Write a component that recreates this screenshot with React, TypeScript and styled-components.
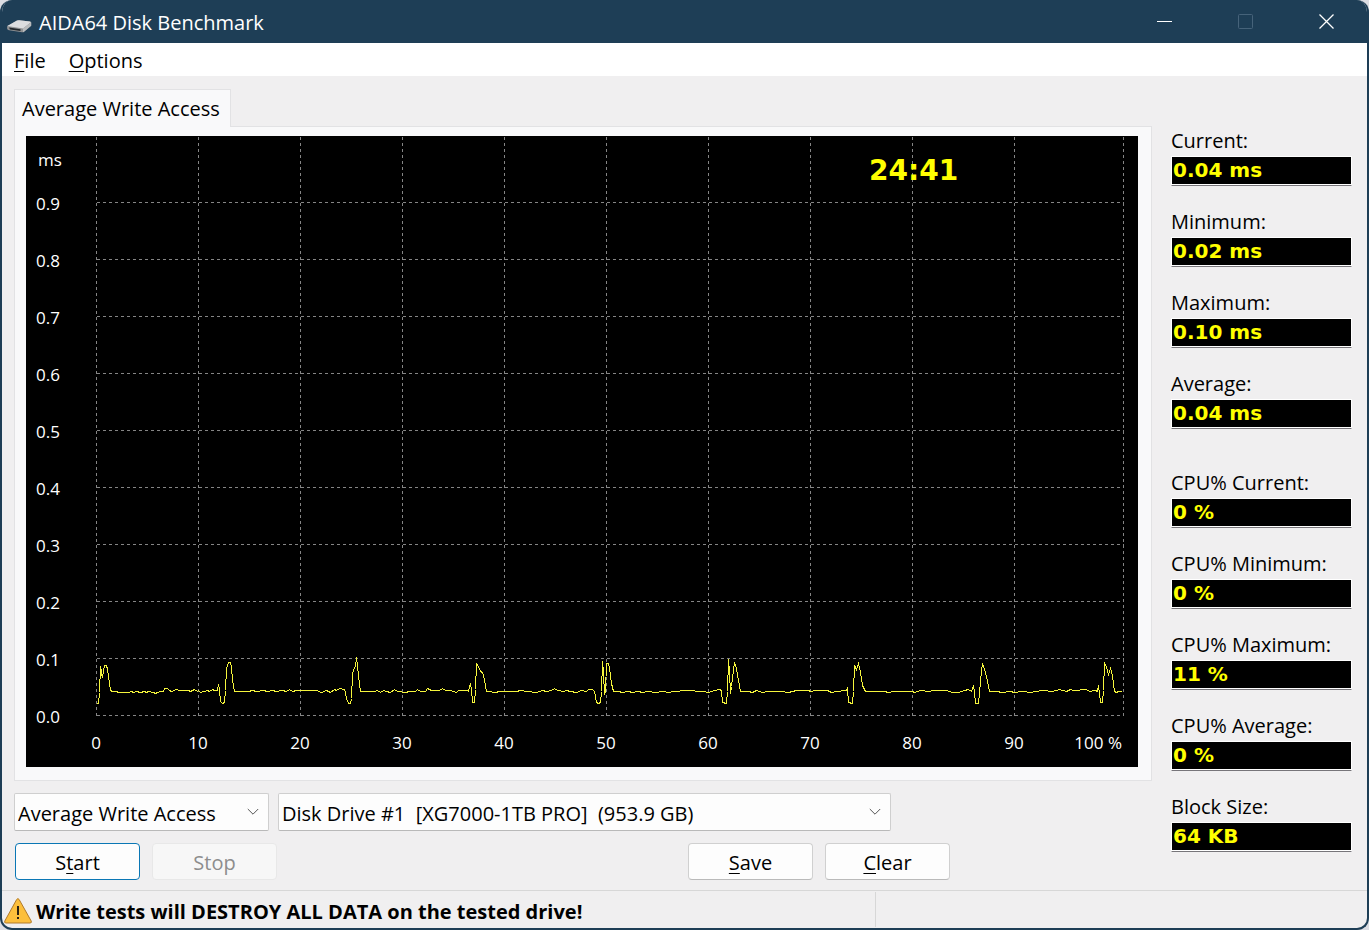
import React from "react";
import styled, { createGlobalStyle, css } from "styled-components";

const uiFont = '"Open Sans", "Noto Sans", sans-serif';
const readoutFont = '"DejaVu Sans", Verdana, sans-serif';

const GlobalStyle = createGlobalStyle`
  *, *::before, *::after { box-sizing: border-box; }
  body {
    margin: 0;
    background: #dcdde3;
    color: #000;
    font: 20px/27px ${uiFont};
  }
  button, select { font: inherit; color: inherit; }
`;

const Window = styled.div`
  display: flex;
  flex-direction: column;
  min-height: 100vh;
  overflow: hidden;
  border: 2px solid #1e3e56;
  border-top: 0;
  border-radius: 12px;
  background: #f0eff0;
`;

const TitleBar = styled.header`
  display: flex;
  align-items: center;
  height: 43px;
  padding-left: 3px;
  background: #1e3e56;
  color: #fff;
`;

const Title = styled.h1`
  flex: 1;
  margin: 0 0 0 6px;
  padding-top: 2px;
  font-size: 20px;
  font-weight: 400;
`;

const CaptionButton = styled.button`
  display: grid;
  place-items: center;
  width: 81px;
  height: 43px;
  padding: 0;
  border: 0;
  background: none;
  color: #fff;

  &:disabled { color: #46637a; }
`;

const MenuBar = styled.nav`
  display: flex;
  gap: 23px;
  height: 33px;
  padding: 0 12px;
  background: #fff;
`;

const MenuItem = styled.button`
  padding: 2px 0 0;
  border: 0;
  background: none;
`;

const Key = styled.span`
  text-decoration: underline;
  text-decoration-thickness: 1px;
  text-underline-offset: 3px;
`;

const Body = styled.main`
  display: grid;
  flex: 1;
  grid-template-columns: minmax(0, 1fr) 181px;
  gap: 19px;
  padding: 13px 15px 10px 12px;
`;

const Tab = styled.button`
  display: block;
  position: relative;
  height: 38px;
  margin-bottom: -1px;
  padding: 0 10px 0 7px;
  border: 1px solid #e2e2e4;
  border-bottom: 0;
  background: #f9f9fa;
`;

const TabPanel = styled.section`
  padding: 9px 13px 13px 11px;
  border: 1px solid #e2e2e4;
  background: #f9f9fa;
`;

const Chart = styled.svg`
  display: block;
  width: 100%;
  height: auto;
  background: #000;
  font-family: ${uiFont};
  font-size: 17px;
`;

const Controls = styled.form`
  display: flex;
  flex-direction: column;
  gap: 12px;
  margin-top: 12px;
`;

const ControlRow = styled.div<{ $gap: number }>`
  display: flex;
  gap: ${(p) => p.$gap}px;
`;

const SelectBox = styled.div<{ $width: number }>`
  position: relative;
  width: ${(p) => p.$width}px;

  svg {
    position: absolute;
    top: 15px;
    right: 10px;
    pointer-events: none;
  }
`;

const Select = styled.select`
  width: 100%;
  height: 38px;
  padding: 2px 30px 0 3px;
  border: 1px solid #cfcfcf;
  border-bottom-color: #b9b9b9;
  border-radius: 2px;
  appearance: none;
  background: #fdfdfd;
`;

const PushButton = styled.button<{ $primary?: boolean }>`
  width: 125px;
  height: 37px;
  padding: 2px 0 0;
  border: 1px solid #d0d0d0;
  border-bottom-color: #bababa;
  border-radius: 4px;
  background: #fdfdfd;

  ${(p) => p.$primary && css`border-color: #0a77b5;`}

  &:disabled {
    border-color: #e8e8e8;
    background: #f7f7f7;
    color: #8d8d8d;
  }
`;

const ButtonGroup = styled.div`
  display: flex;
  gap: 12px;
`;

const ButtonRow = styled.div`
  display: flex;
  justify-content: space-between;
  max-width: 936px;
  padding-left: 1px;
`;

const Readouts = styled.aside`
  display: flex;
  flex-direction: column;
  gap: 42px;
  padding-top: 40px;
`;

const ReadoutGroup = styled.div`
  display: flex;
  flex-direction: column;
  gap: 24px;
`;

const Readout = styled.div`
  display: flex;
  flex-direction: column;

  label {
    height: 27px;
    line-height: 24px;
    white-space: nowrap;
  }

  output {
    height: 30px;
    padding-left: 1px;
    border: 1px solid #fff;
    border-bottom: 1px solid #77757a;
    background: #000;
    box-shadow: inset 0 -1px #fff;
    color: #ff0;
    font: bold 20px/27px ${readoutFont};
  }
`;

const StatusBar = styled.footer`
  display: flex;
  height: 38px;
  border-top: 1px solid #d7d7d7;
`;

const StatusMessage = styled.p`
  display: flex;
  align-items: center;
  gap: 4px;
  width: 64%;
  margin: 1px 0;
  padding: 3px 0 0 2px;
  border-right: 1px solid #d7d7d7;
  font-weight: 700;
`;

const GRID_LEFT = 70;
const GRID_RIGHT = 1097;
const GRID_BOTTOM = 579;
const STEP_X = 102;
const STEP_Y = 57;

const xTicks = [0, 10, 20, 30, 40, 50, 60, 70, 80, 90];
const yTicks = ["0.0", "0.1", "0.2", "0.3", "0.4", "0.5", "0.6", "0.7", "0.8", "0.9"];

const trace = [
  "70,567 72,567 73,556 74,530 75,539 75,533 76,541 77,534 78,529 80,529 81,533 82,539 83,547 84,553 85,555 90,555 92,556 102,556 105,555 107,556 110,555 114,556 118,555 120,556 122,555 127,556 129,557 131,556 134,555 137,555 138,552 141,552 143,554 145,555 150,553 153,554 162,554 164,555 168,553 171,555 172,554 174,556 181,554 183,555 186,553 188,554 191,554",
  "192,548 193,553 194,565 196,567 198,566 199,554 200,532 202,526 204,526 205,531 206,544 208,555 222,555 226,554 230,555 237,554 241,555 246,554 250,555 256,554 260,555 263,553 266,555 270,554 290,554 295,556 300,554 304,556 308,553 310,554 313,552 318,553",
  "319,556 320,562 322,567 324,567 325,562 326,538 327,533 329,530 330,521 331,529 332,539 333,548 334,555 348,555 351,554 354,556 357,554 360,555 364,556 368,553 371,555 380,556 382,555 389,555 391,553 394,555 399,555 401,552 405,554 413,554 416,552 419,554 424,554 430,556 432,554 441,554 442,555",
  "444,547 445,553 446,566 448,566 449,553 450,527 452,530 454,535 456,536 458,543 460,555 470,556 472,555 490,555 494,554 500,555 510,556 516,554 520,555 525,554 528,552 531,554 537,555 540,554 544,555 550,556 555,554 560,555 562,553 566,553 568,555",
  "570,566 572,567 574,566 575,555 576,525 577,536 578,558 579,554 580,527 582,527 583,532 585,547 587,555 592,555 596,556 602,555 606,556 612,555 616,556 621,555 630,556 636,555 642,556 648,555 660,554 676,555 682,556 688,554 694,553",
  "695,555 696,566 700,567 701,555 702,523 703,536 704,557 705,550 706,541 708,526 710,532 712,544 714,555 722,555 726,556 730,554 736,556 741,555 754,555 762,556 770,554 782,554 784,555 790,554 801,554 805,556 810,555 820,554",
  "821,552 822,566 826,567 827,555 828,529 830,533 832,527 834,536 836,549 839,555 858,555 862,556 868,555 886,555 888,556 894,554 902,555 908,554 920,554 926,556 932,556 938,554 942,553 945,555",
  "947,549 948,556 949,567 952,567 954,545 955,534 956,527 958,533 960,540 962,550 963,555 970,555 976,556 984,555 988,556 996,555 1004,556 1010,555 1016,554 1026,555 1033,553 1040,555 1044,553 1047,554 1060,553 1063,555 1069,554",
  "1071,555 1072,549 1073,557 1074,566 1076,566 1077,554 1078,526 1080,531 1082,538 1084,532 1086,539 1088,555 1090,556 1092,555 1095,555",
].join(" ");

function AccessChart() {
  return (
    <Chart viewBox="0 0 1112 631" role="img" aria-label="Write access time over drive position">
      <g transform="translate(.5 .5)" stroke="#858585" strokeDasharray="3 3" shapeRendering="crispEdges">
        {xTicks.map((t, i) => (
          <line key={t} x1={GRID_LEFT + i * STEP_X} x2={GRID_LEFT + i * STEP_X} y1={0} y2={GRID_BOTTOM} />
        ))}
        <line x1={GRID_RIGHT} x2={GRID_RIGHT} y1={0} y2={GRID_BOTTOM} />
        {yTicks.map((t, i) => (
          <line key={t} x1={GRID_LEFT} x2={GRID_RIGHT} y1={GRID_BOTTOM - i * STEP_Y} y2={GRID_BOTTOM - i * STEP_Y} />
        ))}
      </g>
      <polyline
        transform="translate(.5 .5)"
        points={trace}
        fill="none"
        stroke="#f5f53c"
        shapeRendering="crispEdges"
      />
      <g fill="#fff">
        <text x={12} y={30}>ms</text>
        {yTicks.map((t, i) => (
          <text key={t} x={10} y={GRID_BOTTOM + 8 - i * STEP_Y}>{t}</text>
        ))}
        {xTicks.map((t, i) => (
          <text key={t} x={GRID_LEFT + i * STEP_X} y={613} textAnchor="middle">{t}</text>
        ))}
        <text x={GRID_RIGHT - 1} y={613} textAnchor="end">100 %</text>
      </g>
      <text x={843} y={44} fill="#ff0" fontFamily={readoutFont} fontSize={28} fontWeight={700}>24:41</text>
    </Chart>
  );
}

const DriveIcon = () => (
  <svg width="28" height="23" viewBox="0 0 28 23" aria-hidden="true">
    <path d="M2 16.5 12 10.6q1-.5 2.200-.4l10.800 1.300q1.200.2 1.200 1.200v3l-7.200 6q-.8.600-2 .5L4 20.300q-1.600-.3-1.800-1.600z" fill="#8f9193" />
    <path d="M2.200 16 12 10.600q1-.5 2.200-.4l10.800 1.300q1.200.3.600 1.100L18 18.600z" fill="#dcdddf" />
    <path d="m18 18.600 8.200-6.300v3.400l-7.200 6q-.5.400-1 .5z" fill="#b9bbbd" />
    <path d="m4 17.400 11.500 1.900v1.700L5 19.600z" fill="#23282c" />
  </svg>
);

const WarningIcon = () => (
  <svg width="28" height="26" viewBox="0 0 28 26" aria-hidden="true">
    <path d="M12.6 1.6q1.3-2 2.6 0l12 21.4q.8 2-1.200 2H2q-2 0-1.200-2z" fill="#fcbf3c" stroke="#b07a2c" />
    <path d="M14 8v9" stroke="#2a2113" strokeWidth="2" />
    <path d="M14 19v2" stroke="#2a2113" strokeWidth="2" />
  </svg>
);

const Chevron = () => (
  <svg width="12" height="8" viewBox="0 0 12 8" fill="none" stroke="#555" aria-hidden="true">
    <path d="m.8 1 5.2 5.2L11.2 1" />
  </svg>
);

const accessReadouts = [
  ["Current:", "0.04 ms"],
  ["Minimum:", "0.02 ms"],
  ["Maximum:", "0.10 ms"],
  ["Average:", "0.04 ms"],
];

const systemReadouts = [
  ["CPU% Current:", "0 %"],
  ["CPU% Minimum:", "0 %"],
  ["CPU% Maximum:", "11 %"],
  ["CPU% Average:", "0 %"],
  ["Block Size:", "64 KB"],
];

function ReadoutList({ prefix, items }: { prefix: string; items: string[][] }) {
  return (
    <ReadoutGroup>
      {items.map(([label, value], i) => (
        <Readout key={label}>
          <label htmlFor={`${prefix}-${i}`}>{label}</label>
          <output id={`${prefix}-${i}`}>{value}</output>
        </Readout>
      ))}
    </ReadoutGroup>
  );
}

export default function App() {
  return (
    <>
      <GlobalStyle />
      <Window>
        <TitleBar>
          <DriveIcon />
          <Title>AIDA64 Disk Benchmark</Title>
          <CaptionButton aria-label="Minimize">
            <svg width="16" height="16" viewBox="0 0 16 16" stroke="currentColor"><path d="M0 7.5h15" /></svg>
          </CaptionButton>
          <CaptionButton aria-label="Maximize" disabled>
            <svg width="16" height="16" viewBox="0 0 16 16" fill="none" stroke="currentColor">
              <rect x=".5" y=".5" width="14" height="14" rx="1" />
            </svg>
          </CaptionButton>
          <CaptionButton aria-label="Close">
            <svg width="16" height="16" viewBox="0 0 16 16" stroke="currentColor" strokeWidth="1.3">
              <path d="m.5.5 14 14M14.5.5l-14 14" />
            </svg>
          </CaptionButton>
        </TitleBar>

        <MenuBar>
          <MenuItem><Key>F</Key>ile</MenuItem>
          <MenuItem><Key>O</Key>ptions</MenuItem>
        </MenuBar>

        <Body>
          <div>
            <div role="tablist">
              <Tab id="access-tab" role="tab" aria-selected="true" aria-controls="access-panel">Average Write Access</Tab>
            </div>
            <TabPanel id="access-panel" role="tabpanel" aria-labelledby="access-tab">
              <AccessChart />
            </TabPanel>
            <Controls onSubmit={(e) => e.preventDefault()}>
              <ControlRow $gap={9}>
                <SelectBox $width={255}>
                  <Select aria-label="Test"><option>Average Write Access</option></Select>
                  <Chevron />
                </SelectBox>
                <SelectBox $width={613}>
                  <Select aria-label="Drive">
                    <option>{"Disk Drive #1\u00a0 [XG7000-1TB PRO]\u00a0 (953.9 GB)"}</option>
                  </Select>
                  <Chevron />
                </SelectBox>
              </ControlRow>
              <ButtonRow>
                <ButtonGroup>
                  <PushButton type="submit" $primary>S<Key>t</Key>art</PushButton>
                  <PushButton type="button" disabled>Stop</PushButton>
                </ButtonGroup>
                <ButtonGroup>
                  <PushButton type="button"><Key>S</Key>ave</PushButton>
                  <PushButton type="button"><Key>C</Key>lear</PushButton>
                </ButtonGroup>
              </ButtonRow>
            </Controls>
          </div>
          <Readouts>
            <ReadoutList prefix="access" items={accessReadouts} />
            <ReadoutList prefix="system" items={systemReadouts} />
          </Readouts>
        </Body>

        <StatusBar>
          <StatusMessage>
            <WarningIcon />
            Write tests will DESTROY ALL DATA on the tested drive!
          </StatusMessage>
        </StatusBar>
      </Window>
    </>
  );
}
